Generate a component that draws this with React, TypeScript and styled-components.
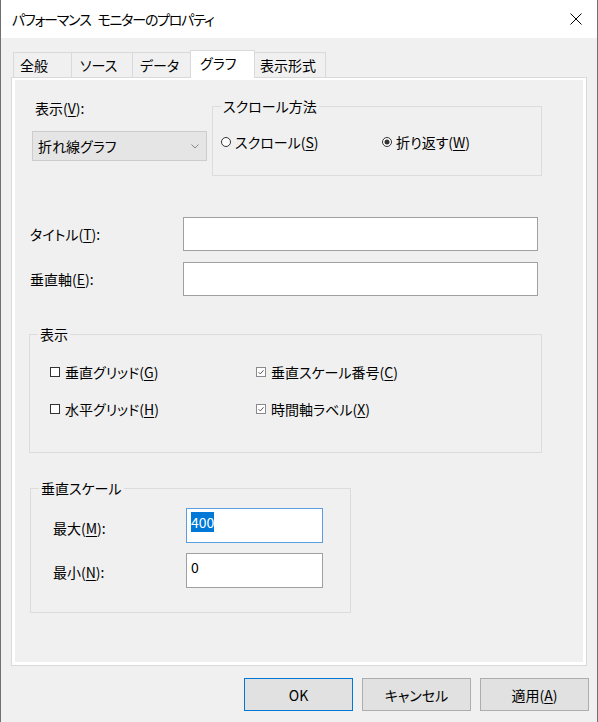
import React from 'react'
import styled, { createGlobalStyle } from 'styled-components'

const GlobalStyle = createGlobalStyle`
  html, body {
    margin: 0;
    padding: 0;
    background: #f0f0f0;
  }
  body {
    font-family: "Noto Sans CJK JP", "Noto Sans", sans-serif;
    font-size: 14px;
    color: #000;
    font-feature-settings: "palt";
  }
`

const Window = styled.div`
  width: 598px;
  height: 722px;
  box-sizing: border-box;
  display: flex;
  flex-direction: column;
  background: #f0f0f0;
  border-left: 1px solid #707070;
  border-right: 1px solid #707070;
  overflow: hidden;
`

const TitleBar = styled.div`
  height: 38px;
  flex: none;
  background: #fff;
  display: flex;
  align-items: center;
  justify-content: space-between;
  padding: 0 15px 0 11px;
`

const Caption = styled.span`
  font-size: 14px;
  letter-spacing: -1.2px;
  word-spacing: 5px;
  line-height: 20px;
`

const Body = styled.div`
  padding: 12px 0 0 10px;
`

const TabStrip = styled.div`
  display: flex;
  align-items: flex-end;
  height: 27px;
  padding-left: 2px;
`

const Tab = styled.div<{ $w: number; $pad: number; $active?: boolean }>`
  width: ${p => p.$w}px;
  height: ${p => (p.$active ? 28 : 25)}px;
  box-sizing: border-box;
  border: 1px solid #d9d9d9;
  border-bottom: none;
  margin-left: -1px;
  margin-bottom: ${p => (p.$active ? -1 : 0)}px;
  padding: 0 0 ${p => (p.$active ? 3 : 0)}px ${p => p.$pad}px;
  background: ${p => (p.$active ? '#fff' : '#f0f0f0')};
  position: relative;
  z-index: ${p => (p.$active ? 1 : 0)};
  display: flex;
  align-items: center;
  line-height: 18px;
  white-space: nowrap;

  &:first-child {
    margin-left: 0;
  }
`

const Panel = styled.div`
  width: 576px;
  height: 589px;
  box-sizing: border-box;
  border: 1px solid #d9d9d9;
  background: #fff;
  padding: 2px 3px 3px 3px;
`

const Page = styled.div`
  height: 100%;
  background: #f0f0f0;
  padding-top: 18px;
  box-sizing: border-box;
`

const TopSection = styled.div`
  display: flex;
  margin-left: 17px;
`

const LeftCol = styled.div`
  width: 175px;
  display: flex;
  flex-direction: column;
`

const Label = styled.div<{ $w?: number; $indent?: number; $drop?: number }>`
  line-height: 20px;
  width: ${p => (p.$w ? `${p.$w}px` : 'auto')};
  padding-left: ${p => p.$indent ?? 0}px;
  padding-top: ${p => p.$drop ?? 0}px;
  flex: none;
`

const Combo = styled.div`
  margin-top: 13px;
  height: 30px;
  box-sizing: border-box;
  background: #e5e5e5;
  border: 1px solid #cccccc;
  display: flex;
  align-items: center;
  justify-content: space-between;
  padding: 0 7px 0 5px;
  line-height: 20px;
`

const Group = styled.fieldset<{ $w: number; $left: number; $top?: number }>`
  margin: ${p => p.$top ?? 0}px 0 0 ${p => p.$left}px;
  padding: 0;
  width: ${p => p.$w}px;
  box-sizing: border-box;
  min-width: 0;
  border: 1px solid #dcdcdc;
`

const Legend = styled.legend`
  font-size: 14px;
  line-height: 16px;
  padding: 0 2px;
  margin-left: 8px;
`

const RadioRow = styled.div`
  display: grid;
  grid-template-columns: 161px auto;
  padding: 18px 0 23px 8px;
`

const CheckGrid = styled.div`
  display: grid;
  grid-template-columns: 206px auto;
  row-gap: 17px;
  padding: 20px 0 33px 20px;
`

const Option = styled.label<{ $gap: number }>`
  display: flex;
  align-items: center;
  gap: ${p => p.$gap}px;
  line-height: 20px;
  white-space: nowrap;
`

const Key = styled.u`
  text-decoration: underline;
  text-underline-offset: 2px;
  text-decoration-thickness: 1px;
`

const FieldRow = styled.div<{ $top: number }>`
  display: flex;
  align-items: center;
  margin: ${p => p.$top}px 0 0 15px;
`

const Edit = styled.div<{ $w: number; $h: number; $focused?: boolean }>`
  width: ${p => p.$w}px;
  height: ${p => p.$h}px;
  box-sizing: border-box;
  background: #fff;
  border: 1px solid ${p => (p.$focused ? '#5b9fe2' : '#a0a0a0')};
  padding: 3px 4px 0;
  line-height: 20px;
  flex: none;
`

const Selected = styled.span`
  background: #0078d7;
  color: #fff;
  display: inline-block;
`

const ScaleBody = styled.div`
  display: flex;
  flex-direction: column;
  gap: 10px;
  padding: 12px 0 24px 22px;
`

const ScaleRow = styled.div`
  display: flex;
  align-items: center;
`

const Footer = styled.div`
  display: flex;
  justify-content: flex-end;
  gap: 9px;
  margin-top: 12px;
  padding-right: 8px;
`

const Button = styled.div<{ $default?: boolean }>`
  width: 109px;
  height: 33px;
  box-sizing: border-box;
  background: #e1e1e1;
  border: 1px solid ${p => (p.$default ? '#0078d7' : '#adadad')};
  display: flex;
  align-items: center;
  justify-content: center;
  line-height: 20px;
`

const CloseIcon = () => (
  <svg width="12" height="12" viewBox="0 0 12 12">
    <path d="M0.5 0.5 L11.5 11.5 M11.5 0.5 L0.5 11.5" stroke="#000" strokeWidth="1" />
  </svg>
)

const Chevron = () => (
  <svg width="8" height="5" viewBox="0 0 8 5">
    <path d="M0.5 0.5 L4 4 L7.5 0.5" fill="none" stroke="#888" strokeWidth="1" />
  </svg>
)

const Radio = ({ checked }: { checked?: boolean }) => (
  <svg width="10" height="10" viewBox="0 0 10 10">
    <circle cx="5" cy="5" r="4.5" fill="#fff" stroke="#333" />
    {checked && <circle cx="5" cy="5" r="2.5" fill="#333" />}
  </svg>
)

const Check = ({ checked }: { checked?: boolean }) => (
  <svg width="10" height="10" viewBox="0 0 10 10">
    <rect x="0.5" y="0.5" width="9" height="9" fill="#fff" stroke={checked ? '#8a8a8a' : '#333'} />
    {checked && <path d="M2.6 5.2 L4.3 6.9 L7.5 3.3" fill="none" stroke="#555" strokeWidth="1" />}
  </svg>
)

// caption text with the access key underlined, e.g. "スクロール(S)"
const Mnemonic = ({ text, k }: { text: string; k: string }) => (
  <span>
    {text}(<Key>{k}</Key>)
  </span>
)

const tabs = [
  { label: '全般', w: 59, pad: 6 },
  { label: 'ソース', w: 62, pad: 8 },
  { label: 'データ', w: 59, pad: 7 },
  { label: 'グラフ', w: 65, pad: 9, active: true },
  { label: '表示形式', w: 72, pad: 5 },
]

const App: React.FC = () => {
  return (
    <Window>
      <GlobalStyle />
      <TitleBar>
        <Caption>パフォーマンス モニターのプロパティ</Caption>
        <CloseIcon />
      </TitleBar>

      <Body>
        <TabStrip>
          {tabs.map(t => (
            <Tab key={t.label} $w={t.w} $pad={t.pad} $active={t.active}>{t.label}</Tab>
          ))}
        </TabStrip>

        <Panel>
          <Page>
            <TopSection>
              <LeftCol>
                <Label $indent={3}><Mnemonic text="表示" k="V" />:</Label>
                <Combo>
                  <span>折れ線グラフ</span>
                  <Chevron />
                </Combo>
              </LeftCol>
              <Group $w={330} $left={5}>
                <Legend>スクロール方法</Legend>
                <RadioRow>
                  <Option $gap={4}><Radio /><Mnemonic text="スクロール" k="S" /></Option>
                  <Option $gap={4}><Radio checked /><Mnemonic text="折り返す" k="W" /></Option>
                </RadioRow>
              </Group>
            </TopSection>

            <FieldRow $top={41}>
              <Label $w={153}><Mnemonic text="タイトル" k="T" />:</Label>
              <Edit $w={355} $h={34} />
            </FieldRow>
            <FieldRow $top={11}>
              <Label $w={153}><Mnemonic text="垂直軸" k="E" />:</Label>
              <Edit $w={355} $h={34} />
            </FieldRow>

            <Group $w={513} $left={14} $top={30}>
              <Legend>表示</Legend>
              <CheckGrid>
                <Option $gap={5}><Check /><Mnemonic text="垂直グリッド" k="G" /></Option>
                <Option $gap={5}><Check checked /><Mnemonic text="垂直スケール番号" k="C" /></Option>
                <Option $gap={5}><Check /><Mnemonic text="水平グリッド" k="H" /></Option>
                <Option $gap={5}><Check checked /><Mnemonic text="時間軸ラベル" k="X" /></Option>
              </CheckGrid>
            </Group>

            <Group $w={321} $left={15} $top={27}>
              <Legend>垂直スケール</Legend>
              <ScaleBody>
                <ScaleRow>
                  <Label $w={133} $drop={4}><Mnemonic text="最大" k="M" />:</Label>
                  <Edit $w={137} $h={35} $focused>
                    <Selected>400</Selected>
                  </Edit>
                </ScaleRow>
                <ScaleRow>
                  <Label $w={133} $drop={3}><Mnemonic text="最小" k="N" />:</Label>
                  <Edit $w={137} $h={35}>0</Edit>
                </ScaleRow>
              </ScaleBody>
            </Group>
          </Page>
        </Panel>
      </Body>

      <Footer>
        <Button $default>OK</Button>
        <Button>キャンセル</Button>
        <Button><Mnemonic text="適用" k="A" /></Button>
      </Footer>
    </Window>
  )
}

export default App
